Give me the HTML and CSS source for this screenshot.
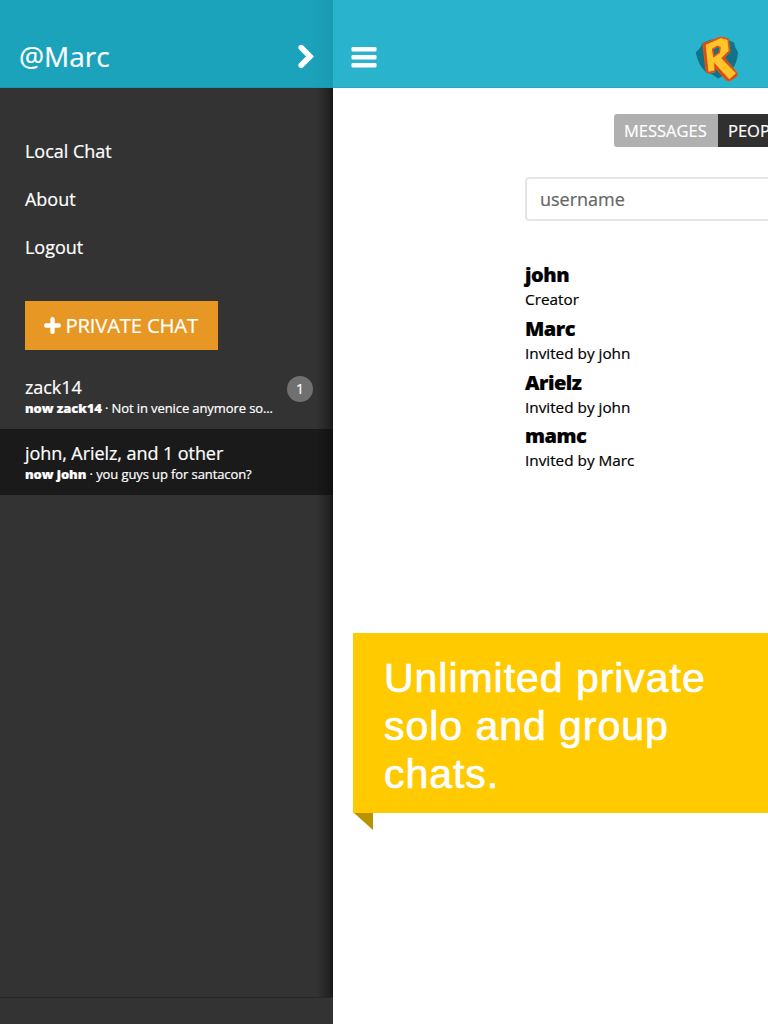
FILE: index.html
```html
<!DOCTYPE html>
<html lang="en">
<head>
<meta charset="utf-8">
<title>Private chat</title>
<link rel="stylesheet" href="styles.css">
</head>
<body>
<div class="app">
  <aside class="sidebar">
    <header class="side-header">
      <span class="handle">@Marc</span>
      <svg class="chevron" width="18" height="28" viewBox="0 0 18 28"><path d="M4.2 4.6 L13 13.4 L4.2 22.2" fill="none" stroke="#fff" stroke-width="5.6" stroke-linecap="round" stroke-linejoin="miter"/></svg>
    </header>
    <div class="side-body">
      <nav class="menu">
        <a class="link local">Local Chat</a>
        <a class="link">About</a>
        <a class="link">Logout</a>
      </nav>
      <button class="private">
        <svg width="17" height="17" viewBox="0 0 17 17"><path d="M8.5 2.2v12.6M2.2 8.5h12.6" stroke="#fff" stroke-width="4.4" stroke-linecap="round"/></svg>
        <span>PRIVATE CHAT</span>
      </button>
      <div class="chat">
        <div class="chat-text">
          <div class="title">zack14</div>
          <div class="preview"><b>now zack14</b> · Not in venice anymore so...</div>
        </div>
        <span class="count">1</span>
      </div>
      <div class="chat active">
        <div class="chat-text">
          <div class="title">john, Arielz, and 1 other</div>
          <div class="preview"><b>now john</b> · you guys up for santacon?</div>
        </div>
      </div>
    </div>
    <footer class="side-footer"></footer>
  </aside>
  <main class="main">
    <header class="top">
      <svg class="burger" width="26" height="22" viewBox="0 0 26 22" fill="#fff"><rect x=".5" y="1" width="25" height="4.4" rx="1.2"/><rect x=".5" y="9" width="25" height="4.4" rx="1.2"/><rect x=".5" y="17" width="25" height="4.4" rx="1.2"/></svg>
      <svg class="logo" width="46" height="50" viewBox="0 0 46 50">
        <path d="M9 9.5 Q24 .5 41 8.5 Q42 14 45 18.3 Q44.5 30 37 38 Q31 41 25 44.5 Q20 40 13 38.5 Q5 31 2.7 18.3 Q8 14 9 9.5Z" fill="#147287"/>
        <path d="M9.8 9.5 L13 8.7 L27 3 L35.3 4.6 L37 17.5 L31.5 23.8 L44.2 39 L44 42 L36.5 47.2 L33.5 46.2 L24 36 L21.8 32.5 L21.8 38.2 L15.3 39.3 L13 37.2Z" fill="#d94a12" stroke="#e2591a" stroke-width="1" stroke-linejoin="round"/>
        <path d="M13 11 L27.7 4.4 L34.2 6 L35.4 16.7 L28 24.3 L42.6 39.3 L36.3 45 L20.8 28 L21 36.2 L15.7 37.4Z" fill="#ffc52b" stroke="#ffc52b" stroke-width=".6" stroke-linejoin="round"/>
        <path d="M19.7 15.3 L24.3 12.4 L27 13.6 L26.3 18.5 L20.7 22.5Z" fill="#147287" stroke="#df5516" stroke-width="1.6" stroke-linejoin="round"/>
      </svg>
    </header>
    <section class="content">
      <div class="tabs"><span class="tab">MESSAGES</span><span class="tab selected">PEOPLE</span></div>
      <div class="field">username</div>
      <ul class="people">
        <li><strong>john</strong><span>Creator</span></li>
        <li><strong>Marc</strong><span>Invited by john</span></li>
        <li><strong>Arielz</strong><span>Invited by john</span></li>
        <li><strong>mamc</strong><span>Invited by Marc</span></li>
      </ul>
    </section>
    <div class="callout">Unlimited private<br>solo and group<br>chats.</div>
  </main>
</div>
</body>
</html>
```
FILE: styles.css
```css
* { box-sizing: border-box; }
body { margin: 0; font-family: "Open Sans", "Noto Sans", sans-serif; overflow: hidden; -webkit-text-stroke: .2px currentColor; }
.app { display: flex; width: 768px; height: 1024px; overflow: hidden; background: #fff; }
.sidebar { width: 333px; flex: none; display: flex; flex-direction: column; color: #fff; background: #333; }
.side-header { height: 88px; display: flex; justify-content: space-between; align-items: flex-start; padding: 36px 18px 0 19px; background: linear-gradient(to right, #1ba3bb 93%, #199bb2); border-bottom: 1px solid #1999b0; }
.handle { font-size: 28px; line-height: 40px; }
.chevron { margin-top: 7px; }
.side-body { flex: 1; padding-top: 39px; background: linear-gradient(to right, #333 95%, #242424 98.5%, #181818); }
.menu { display: flex; flex-direction: column; padding-left: 25px; }
.link { height: 48px; font-size: 18px; line-height: 48px; letter-spacing: -.03px; }
.private { display: flex; align-items: center; gap: 5px; width: 193px; height: 49px; margin: 29.5px 0 13.5px 24.5px; padding: 0 0 0 19px; border: 0; background: #e69724; color: #fff; font: 20.4px/48px "Open Sans", sans-serif; letter-spacing: -.25px; white-space: nowrap; }
.chat { display: flex; justify-content: space-between; height: 66px; padding: 12px 20px 0 25px; }
.chat.active { background: linear-gradient(to right, #1a1a1a 95%, #111); }
.chat-text { white-space: nowrap; }
.title { font-size: 18px; line-height: 24px; letter-spacing: -.07px; }
.preview { font-size: 13px; line-height: 18px; letter-spacing: -.1px; }
.preview b { font-weight: 800; }
.count { width: 26px; height: 26px; margin-top: 1px; border-radius: 50%; background: #707070; font-size: 14px; line-height: 26px; text-align: center; }
.side-footer { height: 27px; border-top: 1px solid #272727; }
.main { flex: 1; min-width: 0; display: flex; flex-direction: column; }
.top { height: 88px; flex: none; display: flex; justify-content: space-between; align-items: flex-start; padding: 34px 29px 0 18px; background: #29b3cc; border-bottom: 1px solid #24a9c1; }
.burger { margin-top: 12px; }
.content { height: 545px; flex: none; padding: 26px 0 0 192px; overflow: hidden; }
.tabs { display: flex; width: 200px; height: 33px; margin-left: 89px; font-size: 16.5px; line-height: 34px; color: #fff; }
.tab { flex: none; width: 104px; padding-left: 10px; border-radius: 3px 0 0 3px; background: #b0b0b0; }
.tab.selected { border-radius: 0; background: #303030; }
.field { width: 500px; height: 44px; margin-top: 30px; padding-left: 13px; border: 2px solid #e5e5e5; border-radius: 4px; color: #666; font-size: 18px; line-height: 41px; }
.people { margin: 41px 0 0; padding: 0; list-style: none; }
.people li { height: 53.8px; display: flex; flex-direction: column; color: #000; }
.people strong { font-size: 20px; line-height: 26px; font-weight: 800; letter-spacing: -.5px; }
.people span { font-size: 15.3px; line-height: 22px; }
.callout { position: relative; height: 180px; margin-left: 20px; padding: 20.5px 0 0 31px; background: #ffca00; color: #fff; font: 41px/48px "Liberation Sans", Arial, sans-serif; letter-spacing: .96px; -webkit-text-stroke: .7px #fff; white-space: nowrap; }
.callout::after { content: ""; position: absolute; left: 1px; top: 180px; width: 19px; height: 17px; background: #b89200; clip-path: polygon(0 0, 100% 0, 100% 100%); }
```
